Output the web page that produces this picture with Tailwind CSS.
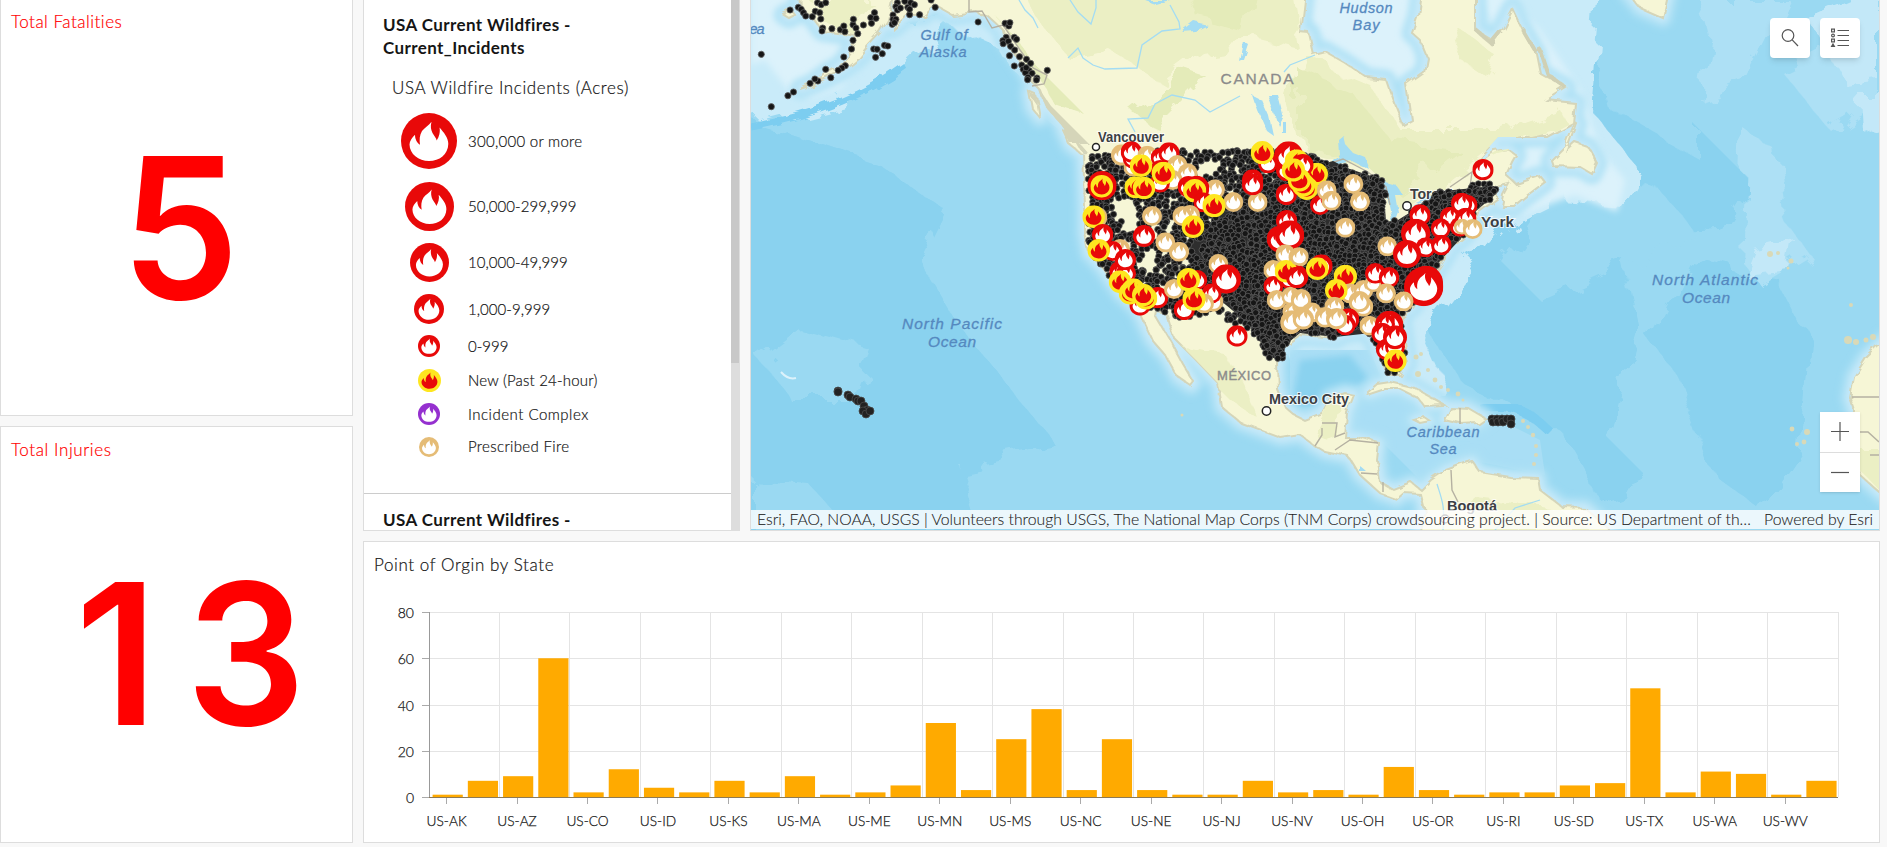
<!DOCTYPE html>
<html lang="en">
<head>
<meta charset="utf-8">
<title>Wildfire Dashboard</title>
<script src="https://cdn.jsdelivr.net/npm/@tailwindcss/browser@4"></script>
</head>
<body class="flex h-[847px] w-[1887px] gap-[10px] overflow-hidden bg-[#f8f8f8] text-[#151515]" style="font-family:Lato,'Open Sans',sans-serif">
<svg width="0" height="0" class="absolute">
  <defs>
    <path id="flame" d="M30.500 8.700C29.200 13 30 17 31.500 20C33 23 35.500 25 35.700 27.500C38 24 39.500 19 38.500 14.500C42.500 19 47.500 25 47.300 31C47 41.500 38.500 48 28 48C17.500 48 8.700 41 8.500 31.500C8.500 28 11 24.500 14 21.700C14 26 16 30 19 31.700C18.300 27 18.500 22 21 18C23.500 14.500 28 12.500 30.500 8.700Z"/>
    <symbol id="red" viewBox="0 0 56 56"><circle cx="28" cy="28" r="28" fill="#e80909"/><use href="#flame" fill="#fff"/></symbol>
    <symbol id="yellow" viewBox="0 0 56 56"><circle cx="28" cy="28" r="28" fill="#fee61f"/><use href="#flame" fill="#e80909"/></symbol>
    <symbol id="purple" viewBox="0 0 56 56"><circle cx="28" cy="28" r="28" fill="#9530cf"/><use href="#flame" fill="#fff"/></symbol>
    <symbol id="tan" viewBox="0 0 56 56"><circle cx="28" cy="28" r="28" fill="#e5bc76"/><use href="#flame" fill="#fff"/></symbol>
  </defs>
</svg>

<aside class="flex w-[353px] shrink-0 flex-col gap-[10px]">
  <section class="flex h-[416px] flex-col border border-t-0 border-[#ddd] bg-white px-[10px] pt-[11px] text-[#f00]">
    <h2 class="text-[17px] leading-[22px] font-light tracking-[.5px] [-webkit-text-stroke:.2px]">Total Fatalities</h2>
    <svg class="mx-[-10px] h-[360px] w-[351px]" viewBox="1 33 351 360" font-family="Inter" font-size="196" font-weight="600" fill="#f00"><text transform="translate(121 298.500) scale(.96 1)">5</text></svg>
  </section>
  <section class="flex h-[417px] flex-col border border-[#ddd] bg-white px-[10px] pt-[12px] text-[#f00]">
    <h2 class="text-[17px] leading-[22px] font-light tracking-[.6px] [-webkit-text-stroke:.2px]">Total Injuries</h2>
    <svg class="mx-[-10px] h-[360px] w-[351px]" viewBox="1 461 351 360" font-family="Inter" font-size="196" font-weight="600" fill="#f00"><text x="75" y="725">1</text><text transform="translate(186 725) scale(.96 1)">3</text></svg>
  </section>
</aside>

<main class="flex w-[1517px] shrink-0 flex-col gap-[10px]">
  <div class="flex h-[531px] gap-[10px]">
    <section class="flex w-[377px] shrink-0 overflow-hidden border border-t-0 border-[#ddd] bg-white">
      <div class="w-[367px] shrink-0">
        <h3 class="pt-[13px] pl-[19px] text-[17px] leading-[23.3px] font-bold tracking-[.4px]">USA Current Wildfires -<br>Current_Incidents</h3>
        <p class="mt-[16px] pl-[28px] text-[17px] leading-[24px] font-light tracking-[.62px] [-webkit-text-stroke:.2px]">USA Wildfire Incidents (Acres)</p>
        <ul class="mt-[7px] pl-[36px] text-[15px] font-light tracking-[.28px] [-webkit-text-stroke:.2px]">
          <li class="flex h-[69px] items-center"><span class="flex w-[58px] justify-center"><svg width="56" height="56"><use href="#red"/></svg></span><span class="pl-[10px]">300,000 or more</span></li>
          <li class="flex h-[61px] items-center"><span class="flex w-[58px] justify-center"><svg width="49" height="49"><use href="#red"/></svg></span><span class="pl-[10px] tracking-[.05px]">50,000-299,999</span></li>
          <li class="flex h-[52px] items-center"><span class="flex w-[58px] justify-center"><svg width="39" height="39"><use href="#red"/></svg></span><span class="pl-[10px] tracking-[.05px]">10,000-49,999</span></li>
          <li class="flex h-[41px] items-center"><span class="flex w-[58px] justify-center"><svg width="30" height="30"><use href="#red"/></svg></span><span class="pl-[10px] tracking-[.05px]">1,000-9,999</span></li>
          <li class="flex h-[33px] items-center"><span class="flex w-[58px] justify-center"><svg width="22" height="22"><use href="#red"/></svg></span><span class="pl-[10px] tracking-[.05px]">0-999</span></li>
          <li class="flex h-[35px] items-center"><span class="flex w-[58px] justify-center"><svg width="23" height="23"><use href="#yellow"/></svg></span><span class="pl-[10px] tracking-[.2px]">New (Past 24-hour)</span></li>
          <li class="flex h-[33px] items-center"><span class="flex w-[58px] justify-center"><svg width="22" height="22"><use href="#purple"/></svg></span><span class="pl-[10px] tracking-[.5px]">Incident Complex</span></li>
          <li class="flex h-[32px] items-center"><span class="flex w-[58px] justify-center"><svg width="20" height="20"><use href="#tan"/></svg></span><span class="pl-[10px] tracking-[.35px]">Prescribed Fire</span></li>
        </ul>
        <h3 class="mt-[30px] border-t border-[#ccc] pt-[14px] pl-[19px] text-[17px] leading-[23.3px] font-bold tracking-[.4px]">USA Current Wildfires -</h3>
      </div>
      <div class="w-[8px] shrink-0 bg-[#ddd]"><div class="h-[363px] bg-[#c8c8c8]"></div></div>
    </section>

    <section class="relative w-[1130px] shrink-0 overflow-hidden border border-t-0 border-[#ddd]">
      <svg id="map" class="block h-[530px] w-[1128px]" viewBox="751 0 1128 530" font-family="'Liberation Sans',Arial,sans-serif">
        <defs>
          <filter id="rough" x="-5%" y="-5%" width="110%" height="110%"><feTurbulence type="fractalNoise" baseFrequency=".06" numOctaves="3" seed="4"/><feDisplacementMap in="SourceGraphic" scale="9"/></filter>
          <filter id="rough2" x="-10%" y="-10%" width="120%" height="120%"><feTurbulence type="fractalNoise" baseFrequency=".03" numOctaves="4" seed="9"/><feDisplacementMap in="SourceGraphic" scale="34"/></filter>
          <filter id="soft"><feGaussianBlur stdDeviation="3"/></filter>
          <path id="land" d="M799 -9L800 8L812 17L822 31L837 33L856 36L850 52L841 65L828 72L812 84L800 89L806 87L827 78L843 70L858 58L868 46L880 33L888 20L894 -9ZM893 28L908 15L923 15L934 5L952 15L975 12L990 18L1003 30L1005 40L1015 55L1025 70L1030 80L1040 90L1045 105L1058 120L1066 130L1075 138L1083 152L1085 207L1085 233L1089 253L1102 267L1120 293L1138 310L1152 340L1167 357L1178 377L1191 386L1194 382L1183 364L1170 340L1157 318L1158 313L1167 315L1174 338L1196 360L1218 383L1222 407L1241 423L1281 438L1300 435L1315 446L1325 452L1349 457L1360 475L1380 493L1397 499L1404 493L1420 494L1424 510L1416 540L1616 540L1607 527L1585 508L1562 507L1540 490L1538 478L1510 477L1480 472L1472 461L1465 463L1446 470L1431 480L1421 490L1412 483L1394 490L1380 482L1377 460L1379 443L1356 437L1345 437L1347 413L1354 395L1345 393L1330 398L1322 413L1304 420L1294 415L1285 407L1278 390L1277 363L1283 347L1300 335L1337 338L1341 334L1360 330L1371 335L1380 357L1388 375L1400 375L1407 363L1403 333L1401 315L1412 307L1442 261L1450 247L1465 235L1478 213L1498 198L1497 188L1510 185L1504 196L1502 206L1514 206L1525 197L1545 182L1540 176L1528 180L1516 184L1506 175L1512 162L1516 155L1508 149L1495 151L1475 165L1480 157L1498 137L1547 137L1573 123L1575 103L1547 100L1566 88L1540 73L1536 53L1521 27L1512 8L1502 28L1493 40L1476 30L1476 -9L1421 -9L1418 15L1412 33L1420 40L1427 57L1424 73L1407 85L1412 120L1403 125L1394 103L1386 80L1367 78L1345 63L1326 52L1314 55L1309 33L1300 32L1305 -9L894 -9ZM1575 122L1566 145L1551 160L1553 166L1580 167L1592 174L1597 163L1588 147L1576 143L1568 150L1577 124ZM1367 393L1377 384L1390 382L1412 387L1430 397L1444 405L1424 406L1418 398L1400 389L1385 389L1370 394ZM1444 420L1450 407L1468 408L1485 418L1478 423L1461 424ZM1414 420L1424 417L1430 421L1420 423ZM1626 -9L1640 8L1663 18L1669 -9ZM1885 340L1866 358L1854 377L1850 398L1854 410L1852 450L1862 477L1885 497ZM1029 92L1036 95L1040 118L1032 108ZM1063 130L1072 136L1086 152L1080 153L1070 145ZM784 15L792 11L795 15L789 18Z"/>
        </defs>
        <rect x="751" width="1128" height="530" fill="#9ad9f2"/>
        <g filter="url(#rough2)">
          <g fill="#8ad2ef">
            <path d="M775 130L880 165L945 210L920 260L955 320L1040 425L1060 450L960 470L980 530L740 530L740 120Z"/>
            <path d="M1560 10L1590 60L1640 60L1690 120L1750 180L1720 230L1620 235L1640 330L1610 440L1650 480L1600 500L1560 430L1460 380L1420 320L1440 280L1520 210L1580 150L1580 80ZM1690 260L1780 280L1810 340L1800 450L1760 510L1710 470L1680 380L1650 340Z"/>
          </g>
          <g fill="#9ad9f2"><path d="M751 480L810 485L850 530L751 530ZM1570 160L1660 190L1700 240L1630 260L1540 300L1500 260ZM800 330L870 350L850 400L790 400L760 360ZM1580 0L1700 -10L1700 160L1610 110Z"/></g>
          <g fill="#adE0f5"><path d="M1700 0L1790 0L1750 80L1700 100L1710 40ZM1780 70L1879 20L1879 100L1830 130ZM1745 130L1775 150L1785 220L1810 255L1760 285L1740 260Z"/></g>
          <g fill="#c3e8f8"><path d="M1810 20L1879 -10L1879 80L1845 85ZM1860 95L1890 95L1890 140L1862 130ZM1755 250L1795 240L1790 270L1745 275Z"/></g>
          <path d="M735 -20L895 -20L900 20L1005 20L1035 90L1090 150L1040 120L1000 50L950 28L905 70L840 102L751 125L735 70Z" fill="#c9ebf9"/>
        </g>
        <path d="M751 -9H900V20L840 88L812 98L790 92L765 60L751 65Z" fill="#dcf2fb" filter="url(#soft)"/>
        <path d="M751 127C800 118 860 100 905 66" fill="none" stroke="#7ccdf0" stroke-width="7" filter="url(#rough)"/>
        <path d="M1290 -9H1600L1590 110L1640 170L1620 205L1560 200L1500 230L1450 290L1420 330L1450 400L1400 385L1360 380L1290 360Z" fill="#c9ebf9" filter="url(#rough2)"/>
        <path d="M1290 -9H1430V130H1390ZM1476 -9H1500L1540 30L1580 90L1600 150L1625 180L1617 212L1575 195L1520 215L1480 160L1550 135Z" fill="#dcf2fb" filter="url(#soft)"/>
        <path d="M1290 350L1370 350L1380 375L1440 400L1500 420L1540 440L1545 475L1470 460L1420 480L1380 440L1345 430L1290 415Z" fill="#a9def5"/>
        <path d="M1300 360L1350 355L1370 380L1345 395L1320 410L1290 410Z" fill="#8ad2ef" filter="url(#soft)"/>
        <path d="M1480 408C1510 400 1530 412 1550 432" fill="none" stroke="#7ccdf0" stroke-width="9" filter="url(#rough)"/>
        <g filter="url(#soft)" fill="none" stroke-linejoin="round"><use href="#land" stroke="#aee1f5" stroke-width="20"/><use href="#land" stroke="#c9eaf9" stroke-width="8"/></g>
        <g filter="url(#rough)">
          <use href="#land" fill="#f6f6d6" stroke="#d5d5b9" stroke-width="2"/>
        </g>
        <clipPath id="lc"><use href="#land"/></clipPath>
        <g clip-path="url(#lc)">
          <g filter="url(#rough2)" fill="#ebefc4">
            <path d="M1020 -10L1290 -10L1300 50L1260 40L1200 50L1160 80L1110 50L1070 60L1040 20ZM1310 60L1370 85L1400 130L1500 130L1560 110L1570 130L1490 150L1440 190L1400 210L1380 170L1300 150L1290 100ZM1180 350L1230 360L1260 420L1230 400ZM1330 400L1345 410L1340 440L1310 430ZM1470 500L1560 510L1590 530L1480 530ZM1860 450L1879 450L1879 490L1860 470ZM1450 20L1500 60L1490 80L1460 60ZM810 0H870L850 30L820 20Z"/>
          </g>
          <g filter="url(#rough2)" fill="#e4ebb9"><path d="M1300 70L1350 90L1390 140L1460 150L1400 195L1360 160L1300 145ZM1130 110L1180 70L1210 80L1160 130ZM1190 -10L1250 -10L1240 30L1200 20ZM1000 20L1040 70L1090 120L1060 110L1030 70Z"/></g>
          <path d="M1000 25L1020 60L1050 105L1090 145L1070 145L1040 110L1005 60Z" fill="#d5d5b9" filter="url(#rough)"/>
        </g>
        <path d="M1539 48L1548 75L1566 88M1476 30L1490 42L1500 30M1522 28L1536 52" stroke="#d0d0b4" stroke-width="4" fill="none" filter="url(#rough)"/>
        <g fill="none" stroke="#a3dcf3" stroke-width="1.3">
          <path d="M1019 0L1025 10L1033 18L1038 28M1070 0L1078 12L1091 24L1096 8V0M1170 5L1179 22L1180 29L1162 31L1142 45L1137 68L1105 69L1093 65L1083 58L1078 48L1068 58M1315 55L1290 65L1284 72M1240 96L1210 112L1195 100L1172 95L1155 104L1148 118L1128 119L1135 132M1437 484C1442 500 1445 505 1443 530M1495 530L1515 508L1540 500"/>
        </g>
        <g fill="#a3dcf3" filter="url(#rough)"><path d="M1182 32L1195 22L1208 25L1195 31ZM1240 62L1244 42L1249 45L1244 60ZM1252 95L1262 100L1269 116L1273 135L1266 130L1257 110ZM1268 95H1278L1283 115L1278 125ZM1282 122H1286V133H1282ZM1143 0H1170L1155 4ZM1339 140L1344 136L1346 145L1352 152L1365 157L1370 170L1350 160L1330 165L1340 155ZM1380 180L1395 184L1403 195H1395L1398 212L1393 225L1388 200ZM1405 208L1433 195L1430 200ZM1360 466L1367 472H1360Z"/></g>
        <path d="M969 0V12L982 11L992 28L1003 25L1020 50L1033 68L1047 75L1044 84L1032 86M1470 187L1472 172L1450 187M1325 165L1343 159L1368 172L1386 187L1390 205M1322 423H1337L1335 437L1345 433M1315 446L1322 435V428M1335 450L1350 440L1378 443M1383 482V492M1361 473L1377 474M1460 408V424M1451 470L1452 490L1458 502M1879 397H1852M1860 432H1868L1879 442M1870 455H1879" fill="none" stroke="#b5b1a2" stroke-width="1.4"/>
        <g fill="#d9d9b7"><circle cx="1416" cy="357" r="2.5"/><circle cx="1421" cy="354" r="2"/><circle cx="1418" cy="374" r="3"/><circle cx="1428" cy="370" r="2"/><circle cx="1435" cy="380" r="2.4"/><circle cx="1441" cy="387" r="2"/><circle cx="1448" cy="390" r="2"/><circle cx="1458" cy="394" r="2.4"/><circle cx="1463" cy="400" r="1.5"/><circle cx="1523" cy="421" r="2"/><circle cx="1528" cy="427" r="2"/><circle cx="1533" cy="435" r="2.2"/><circle cx="1536" cy="446" r="2"/><circle cx="1536" cy="455" r="2"/><circle cx="1534" cy="464" r="2"/><circle cx="1848" cy="340" r="4"/><circle cx="1856" cy="342" r="3"/><circle cx="1866" cy="340" r="2.5"/><circle cx="1873" cy="337" r="3"/><circle cx="1792" cy="429" r="2.4"/><circle cx="1797" cy="444" r="2"/><circle cx="1807" cy="432" r="3"/><circle cx="1804" cy="442" r="2.4"/><circle cx="1770" cy="254" r="3"/><circle cx="1778" cy="253" r="2"/><circle cx="1791" cy="261" r="2.5"/><circle cx="1851" cy="305" r="2"/><circle cx="1788" cy="268" r="1.5"/><circle cx="1219" cy="394" r="1.5"/><circle cx="1182" cy="415" r="1.5"/></g>
        <path d="M781 372Q788 380 796 378" fill="none" stroke="#dcf2fb" stroke-width="2"/>

        <g font-style="italic" fill="#5589bf" stroke="#5589bf" stroke-width=".3" font-size="14.5" text-anchor="middle">
          <text x="944" y="40" textLength="47">Gulf of</text><text x="943" y="57" textLength="47">Alaska</text>
          <text x="1366" y="13" textLength="53">Hudson</text><text x="1366" y="30" textLength="27">Bay</text>
          <text x="952" y="329" font-size="15.5" textLength="100">North Pacific</text><text x="952" y="347" font-size="15.5" textLength="48">Ocean</text>
          <text x="1705" y="285" font-size="15.5" textLength="106">North Atlantic</text><text x="1706" y="303" font-size="15.5" textLength="48">Ocean</text>
          <text x="1443" y="437" textLength="73">Caribbean</text><text x="1443" y="454" textLength="27">Sea</text>
          <text x="757" y="34" textLength="15">ea</text>
        </g>
        <g fill="#8b8b8b" text-anchor="middle"><text x="1257" y="83.500" font-size="15.5" stroke="#8b8b8b" stroke-width=".3" textLength="73">CANADA</text><text x="1244" y="380" font-size="13" stroke="#8b8b8b" stroke-width=".4" textLength="54">MÉXICO</text></g>
        <g fill="#3c3f44" font-weight="700" stroke="#fff" stroke-opacity=".75" stroke-width="2" paint-order="stroke" font-size="14.5">
          <text x="1098" y="142" textLength="66" lengthAdjust="spacingAndGlyphs">Vancouver</text><text x="1410" y="198.500" textLength="52" lengthAdjust="spacingAndGlyphs">Toronto</text><text x="1481" y="227" textLength="33" lengthAdjust="spacingAndGlyphs">York</text><text x="1269" y="403.500" textLength="80" lengthAdjust="spacingAndGlyphs">Mexico City</text><text x="1447" y="511" textLength="50" lengthAdjust="spacingAndGlyphs">Bogotá</text>
        </g>
        <g fill="#fff" stroke="#222" stroke-width="1.5"><circle cx="1096" cy="147" r="3.5"/><circle cx="1407" cy="206" r="4.2"/><circle cx="1266.500" cy="411" r="4.2"/><circle cx="1445" cy="519" r="4"/></g>
        <g id="dots"></g>
        <g id="fires"></g>
      </svg>

      <div class="absolute top-[18px] right-[19px] flex gap-[10px]">
        <button class="flex size-[40px] items-center justify-center rounded-[4px] bg-white shadow-md"><svg width="20" height="20" viewBox="0 0 20 20" fill="none" stroke="#555" stroke-width="1.2"><circle cx="8" cy="7.500" r="5.800"/><path d="M12.200 11.800L18 18"/></svg></button>
        <button class="flex size-[40px] items-center justify-center rounded-[4px] bg-white shadow-md"><svg width="20" height="20" viewBox="0 0 20 20" fill="none" stroke="#555" stroke-width="1.2"><path d="M7.500 2.500H19M7.500 7.500H19M7.500 12.500H19M7.500 17.500H19"/><rect x="1.600" y="1.100" width="2.800" height="2.800"/><circle cx="3" cy="7.500" r="1.400"/><rect x="1.600" y="11.100" width="2.800" height="2.800"/><path d="M3 16L4.400 18.500H1.600Z"/></svg></button>
      </div>
      <div class="absolute right-[19px] bottom-[38px] h-[80px] w-[40px] bg-white shadow">
        <div class="flex h-[41px] items-center justify-center border-b border-[#ddd]"><svg width="20" height="20" stroke="#555" stroke-width="1.200"><path d="M1 9.500H19M10 0V19"/></svg></div>
        <div class="flex h-[39px] items-center justify-center"><svg width="20" height="20" stroke="#555" stroke-width="1.200"><path d="M1 9.500H19"/></svg></div>
      </div>
      <div class="absolute inset-x-0 bottom-px h-[19px] bg-white/80">
        <svg class="block h-[19px] w-[1128px]" viewBox="751 510 1128 19" font-size="15.500" font-weight="300" fill="#222" stroke="#222" stroke-width=".1"><text x="757" y="525" textLength="994" lengthAdjust="spacingAndGlyphs">Esri, FAO, NOAA, USGS | Volunteers through USGS, The National Map Corps (TNM Corps) crowdsourcing project. | Source: US Department of th…</text><text x="1764" y="525" textLength="109" lengthAdjust="spacingAndGlyphs">Powered by Esri</text></svg>
      </div>
    </section>
  </div>

  <section class="h-[302px] border border-[#ddd] bg-white">
    <h2 class="h-[36px] pt-[12px] pl-[10px] text-[17px] leading-[22px] font-light tracking-[.6px] [-webkit-text-stroke:.2px]">Point of Orgin by State</h2>
    <svg id="chart" class="block h-[264px] w-[1515px]" viewBox="364 578 1515 264" font-size="14" font-weight="300" fill="#151515"></svg>
  </section>
</main>

<script>
const NS = 'http://www.w3.org/2000/svg';
function add(parent, tag, attrs, text) {
  const e = document.createElementNS(NS, tag);
  for (const k in attrs) e.setAttribute(k, attrs[k]);
  if (text !== undefined) e.textContent = text;
  parent.appendChild(e);
  return e;
}

// Bar chart
const values = [1,7,9,60,2,12,4,2,7,2,9,1,2,5,32,3,25,38,3,25,3,1,1,7,2,3,1,13,3,1,2,2,5,6,47,2,11,10,1,7];
const names = ['AK','AZ','CO','ID','KS','MA','ME','MN','MS','NC','NE','NJ','NV','OH','OR','RI','SD','TX','WA','WV'];
const chart = document.getElementById('chart');
const X0 = 429.5, X1 = 1838.5, Y0 = 797.5, step = (X1 - X0) / 40, unit = 185 / 80;
for (let k = 1; k <= 20; k++) { const x = Math.round(X0 + k * 2 * step) - .5; add(chart, 'path', {d: `M${x} 612V797`, stroke: '#e4e4e4'}); }
for (let v = 0; v <= 80; v += 20) {
  const y = Math.round(797 - v * unit) + .5;
  if (v) add(chart, 'path', {d: `M429 ${y}H1838`, stroke: '#e4e4e4'});
  add(chart, 'path', {d: `M422 ${y}H430`, stroke: '#aaa'});
  add(chart, 'text', {x: 414, y: y + 5.5, 'text-anchor': 'end', stroke: '#151515', 'stroke-width': .25}, v);
}
values.forEach((v, i) => add(chart, 'rect', {x: X0 + i * step + 3.1, y: Y0 - v * unit - .5, width: 30.2, height: v * unit + .5, fill: '#ffaa00'}));
add(chart, 'path', {d: 'M429.500 612V798', stroke: '#999'});
add(chart, 'path', {d: 'M429 797.500H1838', stroke: '#8d7a55'});
names.forEach((n, i) => {
  const x = X0 + (2 * i + .5) * step;
  add(chart, 'path', {d: `M${Math.round(x) - .5} 798V804`, stroke: '#aaa'});
  add(chart, 'text', {x: x - .5, y: 826, 'text-anchor': 'middle', 'font-size': 13.7, stroke: '#151515', 'stroke-width': .25}, 'US-' + n);
});

// Observation dots
let s = 7;
const rnd = () => (s = (s * 16807) % 2147483647) / 2147483647;
function inside(x, y, p) {
  let c = false;
  for (let i = 0, j = p.length - 1; i < p.length; j = i++)
    if ((p[i][1] > y) !== (p[j][1] > y) && x < (p[j][0] - p[i][0]) * (y - p[i][1]) / (p[j][1] - p[i][1]) + p[i][0]) c = !c;
  return c;
}
const usa = [[1096,152],[1130,151],[1285,150],[1303,154],[1333,160],[1322,168],[1347,166],[1350,172],[1367,172],[1383,180],[1386,198],[1386,222],[1398,220],[1418,207],[1430,200],[1433,192],[1467,189],[1474,184],[1493,182],[1498,192],[1490,202],[1476,211],[1464,235],[1450,245],[1440,261],[1425,285],[1411,306],[1400,315],[1402,333],[1406,362],[1394,375],[1388,374],[1380,357],[1371,335],[1360,329],[1341,332],[1335,338],[1300,333],[1283,347],[1284,361],[1276,363],[1266,356],[1257,340],[1246,327],[1230,322],[1213,311],[1183,320],[1155,309],[1138,308],[1120,292],[1102,266],[1089,252],[1088,233],[1088,200],[1087,158]];
const dense = [[1240,196],[1300,170],[1333,161],[1347,168],[1383,180],[1386,222],[1398,220],[1430,200],[1433,192],[1494,186],[1496,194],[1476,211],[1464,235],[1440,261],[1411,306],[1400,315],[1404,345],[1400,367],[1371,333],[1335,337],[1300,333],[1283,347],[1284,361],[1270,357],[1250,325],[1220,300],[1190,270],[1190,240]];
const holes = [[1126,212,10],[1131,226,8],[1118,208,6],[1210,169,8],[1200,174,6],[1148,263,9],[1195,246,6],[1170,229,5],[1150,256,6],[1228,308,6],[1352,205,3],[1353,213,3],[1185,262,5]];
const dots = document.getElementById('dots');
add(dots, 'polygon', {points: dense.map(p => p.join()).join(' '), fill: '#2e2e2e'});
const dot = (x, y) => add(dots, 'circle', {cx: x.toFixed(1), cy: y.toFixed(1), r: 3.1, fill: '#161616', stroke: '#606060', 'stroke-width': .8});
for (let y = 150; y < 378; y += 4.3) for (let x = 1082; x < 1500; x += 4.5) {
  const px = x + (rnd() - .5) * 5, py = y + (rnd() - .5) * 5, skip = rnd();
  if (!inside(px, py, usa)) continue;
  if (holes.some(h => Math.hypot(px - h[0], py - h[1]) < h[2])) continue;
  if (px < 1240 && skip < .08) continue;
  dot(px, py);
}
// Alaska: x in 1/2.703 px, y in 1/3 px
[[122,30],[144,22],[152,28],[158,38],[164,48],[182,50],[190,34],[202,38],[205,57],[196,8],[206,14],[218,8],[235,86],[210,84],[208,93],[258,89],[267,78],[270,95],[292,74],[300,84],[305,101],[293,58],[320,75],[340,53],[342,70],[350,38],[354,55],[292,121],[288,147],[267,171],[271,197],[262,204],[252,211],[218,208],[232,233],[197,243],[189,237],[176,250],[131,276],[116,287],[71,320],[44,163],[348,147],[357,148],[353,172],[371,161],[377,136],[386,138],[400,45],[400,58],[408,58],[398,73],[404,68],[412,8],[408,20],[412,30],[420,24],[432,4],[440,22],[445,44],[472,44],[448,8],[458,14],[445,28],[503,0],[514,22],[630,66],[703,70],[713,78],[716,68],[706,112],[697,122],[698,131],[712,124],[728,112],[734,118],[718,139],[729,150],[715,167],[742,170],[728,198],[748,195],[761,178],[772,190],[752,208],[768,212],[758,218],[776,220],[765,232],[764,239],[789,234],[788,240],[760,203],[817,211]].forEach(p => dot(745 + p[0] / 2.703, p[1] / 3));
// Hawaii and Puerto Rico
[[838,391],[838,392],[848,395],[850,397],[856,399],[858,401],[861,401],[864,406],[867,410],[863,411],[866,414],[870,411],[1492,419],[1493,422],[1497,419],[1498,422],[1502,419],[1503,422],[1507,419],[1511,419],[1511,424]].forEach(p => add(dots, 'circle', {cx: p[0], cy: p[1], r: 4, fill: '#222', stroke: '#4a4a4a', 'stroke-width': .8}));

// Fire markers: [symbol, x, y, radius]; each list is on a grid of thirds of a pixel from its origin
const fires = document.getElementById('fires');
const sym = {r: 'red', y: 'yellow', t: 'tan'};
function place(ox, oy, list) {
  list.forEach(([k, x, y, r]) => add(fires, 'use', {href: '#' + sym[k], x: ox + (x - r) / 3, y: oy + (y - r) / 3, width: 2 * r / 3, height: 2 * r / 3}));
}
place(1070, 120, [
['t',155,105,32],['t',190,140,30],['r',188,115,30],['r',184,96,32],['t',232,107,30],['r',270,112,28],['r',297,99,32],['t',322,135,30],['r',270,150,30],['t',353,160,30],['t',308,180,30],['r',270,188,30],
['y',213,137,34],['y',280,160,35],['y',196,202,33],['y',222,204,34],['r',96,197,44],['y',95,199,34],
['t',435,208,30],['r',355,200,32],['r',380,205,38],['t',372,215,32],['y',374,212,35],['t',490,246,30],['r',400,247,30],['y',432,257,35],['t',563,246,30],['r',548,180,32],['r',548,194,32],
['r',594,130,30],['y',577,98,35],['r',652,150,34],['r',656,108,44],['r',649,223,32],
['t',80,292,32],['y',71,290,34],['r',98,344,32],['t',246,288,30],['r',222,348,33],['t',360,285,30],['t',337,288,30],['y',369,320,34],['t',286,367,30],['t',327,395,30],['t',150,387,30],['r',128,393,30],['y',86,391,34],
['r',150,455,32],['r',168,460,30],['r',166,419,32],['r',210,555,32],['y',150,485,34],['y',180,520,34],['y',190,510,35],['r',263,533,32],['y',228,535,34],['y',220,525,34],
['t',445,432,30],['t',312,507,30],['r',382,480,30],['y',355,479,35],['r',469,477,44],['t',430,545,30],['r',425,520,30],['t',402,550,30],['r',343,568,32],['y',372,537,35],['r',501,648,32],
['r',650,302,32],['r',630,357,40],['r',659,345,44],['t',646,403,30],['t',685,412,30],['t',610,450,30],['r',680,470,35],['r',610,498,30],['r',660,475,33],['y',648,454,34],['t',620,540,30],['t',662,528,28],['t',693,538,30],['t',665,575,28],['t',700,585,32],['t',663,610,32]]);
place(1290, 120, [
['y',20,124,36],['y',50,160,34],['y',80,162,34],['r',38,135,33],['y',50,205,35],['y',40,195,35],['y',28,180,35],['y',10,150,35],
['r',90,255,30],['t',110,211,30],['t',124,242,30],['t',190,192,30],['t',210,244,30],['t',166,323,30],['r',579,149,32],
['r',390,285,32],['r',533,255,30],['r',480,290,30],['r',515,250,32],['r',510,320,30],['r',527,295,32],['r',452,325,30],['t',516,320,24],['t',548,327,30],['r',377,340,44],['t',292,379,30],['r',407,382,30],['r',454,375,31],['r',351,402,42],
['r',94,437,34],['y',82,446,34],['r',20,472,32],['t',28,410,28],['y',166,469,35],['t',180,520,30],['y',139,511,34],['t',220,510,30],['t',250,490,26],['r',256,460,31],['r',297,472,31],['r',408,488,51],['r',401,500,59],
['t',33,538,31],['t',220,560,30],['t',208,545,32],['t',288,520,30],['t',341,544,30],['t',65,577,30],['t',5,605,34],['t',40,597,32],
['t',133,560,30],['t',105,592,31],['r',175,598,33],['r',166,615,31],['t',140,596,32],
['t',238,617,30],['r',298,614,42],['r',285,612,30],['r',276,640,32],['r',290,688,32],['r',315,680,30],['r',315,652,36],['y',316,722,34]]);
</script>
</body>
</html>
